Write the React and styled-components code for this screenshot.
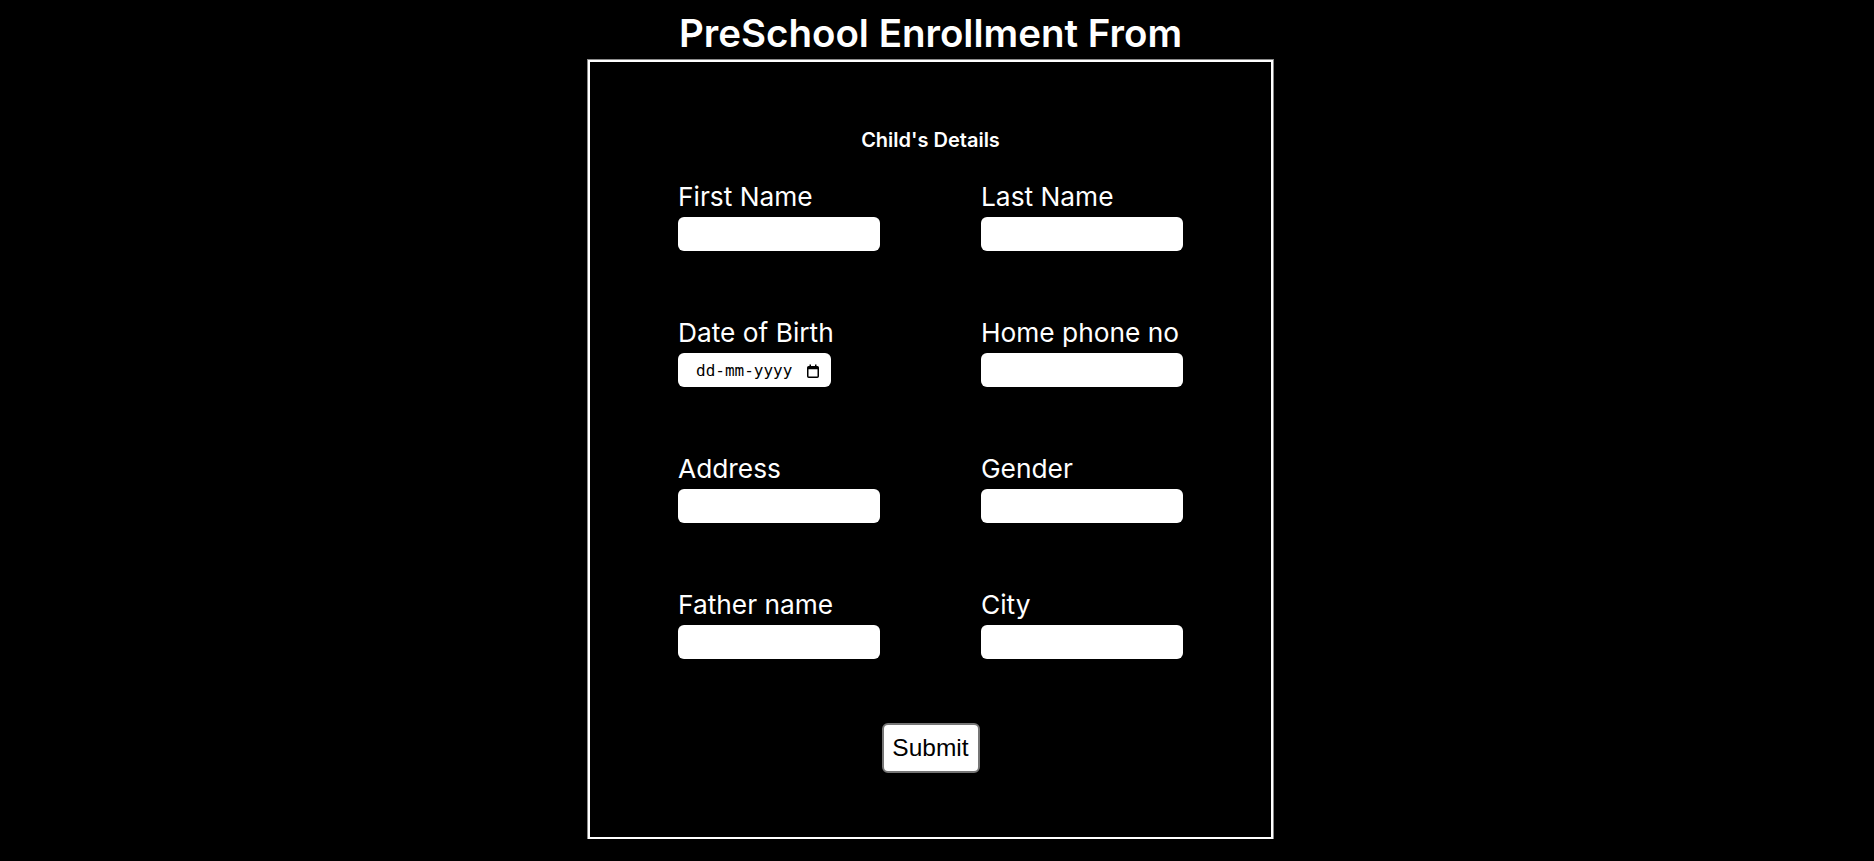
import React from "react";
import styled, { createGlobalStyle } from "styled-components";

const GlobalStyle = createGlobalStyle`
  html, body {
    margin: 0;
    padding: 0;
    background-color: #000000;
  }
  * {
    box-sizing: border-box;
  }
`;

const Page = styled.div`
  display: flex;
  flex-direction: column;
  align-items: center;
  padding-right: 13px;
  font-family: Inter, "Noto Sans", sans-serif;
  color: #ffffff;
`;

const Title = styled.h1`
  margin: 11px 0 5px;
  font-size: 38.5px;
  line-height: 44px;
  font-weight: 600;
`;

const FormBox = styled.form`
  width: 685px;
  border: 2px solid #ffffff;
  box-shadow: 0 0 0 1px #8a8a8a;
  padding: 66px 0 64px;
  display: flex;
  flex-direction: column;
  align-items: center;
`;

const SectionTitle = styled.h4`
  margin: 0 0 30px;
  font-size: 20px;
  line-height: 24px;
  font-weight: 600;
`;

const Grid = styled.div`
  display: grid;
  grid-template-columns: 202px 202px;
  column-gap: 101px;
  row-gap: 67px;
`;

const Field = styled.div`
  display: flex;
  flex-direction: column;
  align-items: flex-start;
  gap: 5px;
`;

const Label = styled.label`
  font-size: 26.3px;
  line-height: 30px;
  font-weight: 400;
  white-space: nowrap;
`;

const TextInput = styled.input`
  width: 202px;
  height: 34px;
  border: none;
  border-radius: 6px;
  background: #ffffff;
  padding: 0 8px;
  font-size: 16px;
  outline: none;
`;

const DateWrap = styled.div`
  position: relative;
  width: 153px;
  height: 34px;
`;

const DateInput = styled.input`
  width: 100%;
  height: 100%;
  border: none;
  border-radius: 6px;
  background: #ffffff;
  padding: 0 34px 0 18px;
  font-family: "DejaVu Sans Mono", monospace;
  font-size: 16px;
  color: #000000;
  outline: none;
  &::placeholder {
    color: #000000;
    opacity: 1;
  }
`;

const CalendarIcon = styled.svg`
  position: absolute;
  right: 12px;
  top: 11px;
  width: 12px;
  height: 14px;
  pointer-events: none;
`;

const SubmitButton = styled.button`
  margin-top: 64px;
  width: 98px;
  height: 50px;
  border: 2px solid #767676;
  border-radius: 6px;
  background: #ffffff;
  color: #000000;
  font-family: "Liberation Sans", Arial, sans-serif;
  font-size: 24.5px;
  padding: 0;
  cursor: pointer;
`;

const fields = [
  { id: "fname", label: "First Name" },
  { id: "lname", label: "Last Name" },
  { id: "dob", label: "Date of Birth", type: "date" },
  { id: "phone", label: "Home phone no" },
  { id: "address", label: "Address" },
  { id: "gender", label: "Gender" },
  { id: "father", label: "Father name" },
  { id: "city", label: "City" },
];

function DateField({ id }) {
  return (
    <DateWrap>
      <DateInput id={id} type="text" placeholder="dd-mm-yyyy" />
      <CalendarIcon viewBox="0 0 12 14" fill="none">
        <rect x="0.75" y="2.75" width="10.5" height="10.5" rx="1" stroke="#000" strokeWidth="1.5" />
        <rect x="0.75" y="2.75" width="10.5" height="2.5" fill="#000" />
        <rect x="2.5" y="0.5" width="1.5" height="2.5" fill="#000" />
        <rect x="8" y="0.5" width="1.5" height="2.5" fill="#000" />
      </CalendarIcon>
    </DateWrap>
  );
}

export default function App() {
  return (
    <Page>
      <GlobalStyle />
      <Title>PreSchool Enrollment From</Title>
      <FormBox onSubmit={(e) => e.preventDefault()}>
        <SectionTitle>Child's Details</SectionTitle>
        <Grid>
          {fields.map((f) => (
            <Field key={f.id}>
              <Label htmlFor={f.id}>{f.label}</Label>
              {f.type === "date" ? (
                <DateField id={f.id} />
              ) : (
                <TextInput id={f.id} type="text" />
              )}
            </Field>
          ))}
        </Grid>
        <SubmitButton type="submit">Submit</SubmitButton>
      </FormBox>
    </Page>
  );
}
